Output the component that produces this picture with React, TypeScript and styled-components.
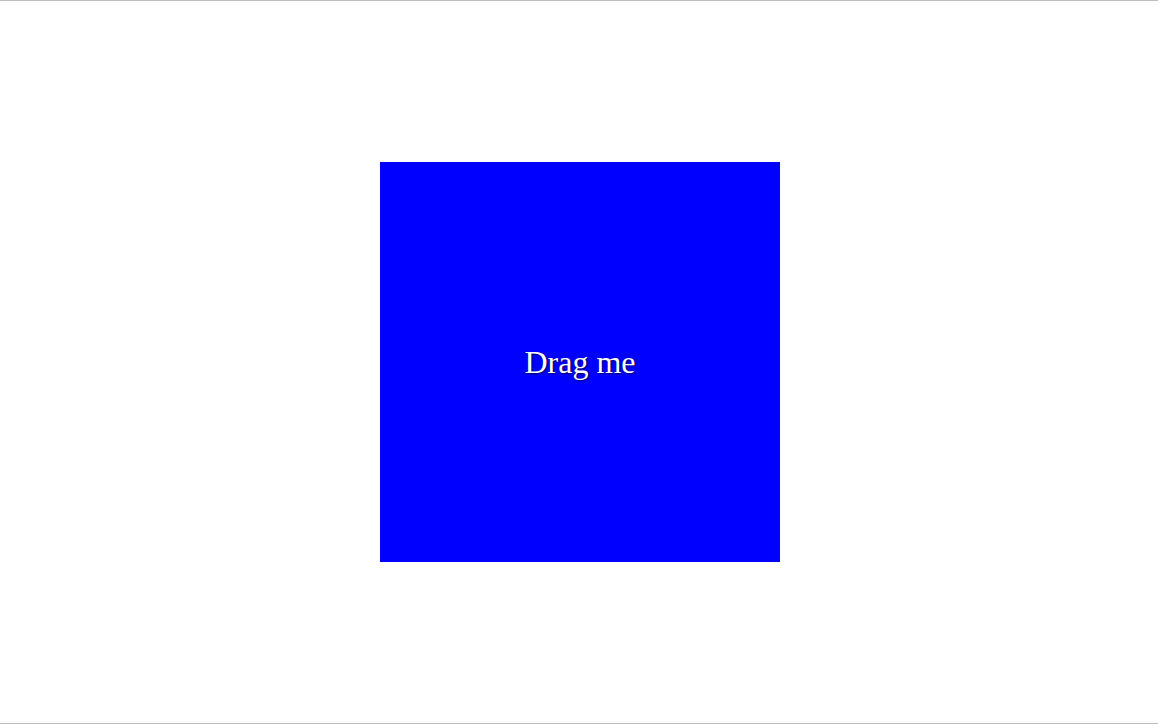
import styled, {createGlobalStyle} from "styled-components";

const GlobalStyle = createGlobalStyle`
    html, body {
        margin: 0;
        padding: 0;
        background: #fff;
    }
`;

const Frame = styled.div`
    box-sizing: border-box;
    height: 100vh;
    border-top: 1px solid #bdbdbd;
    border-bottom: 1px solid #bdbdbd;
    display: flex;
    justify-content: center;
    align-items: center;
`;

const DragBox = styled.div`
    width: 400px;
    height: 400px;
    margin-left: 2px;
    background-color: #0000ff;
    display: flex;
    justify-content: center;
    align-items: center;
    color: #fff;
    font-family: "Liberation Serif", "Times New Roman", serif;
    font-size: 32px;
    text-shadow: 1px 1px 2px rgba(0, 0, 0, 0.7);
    cursor: grab;
    user-select: none;
`;

export default function App() {
  return (
    <>
      <GlobalStyle />
      <Frame>
        <DragBox>Drag me</DragBox>
      </Frame>
    </>
  );
}
